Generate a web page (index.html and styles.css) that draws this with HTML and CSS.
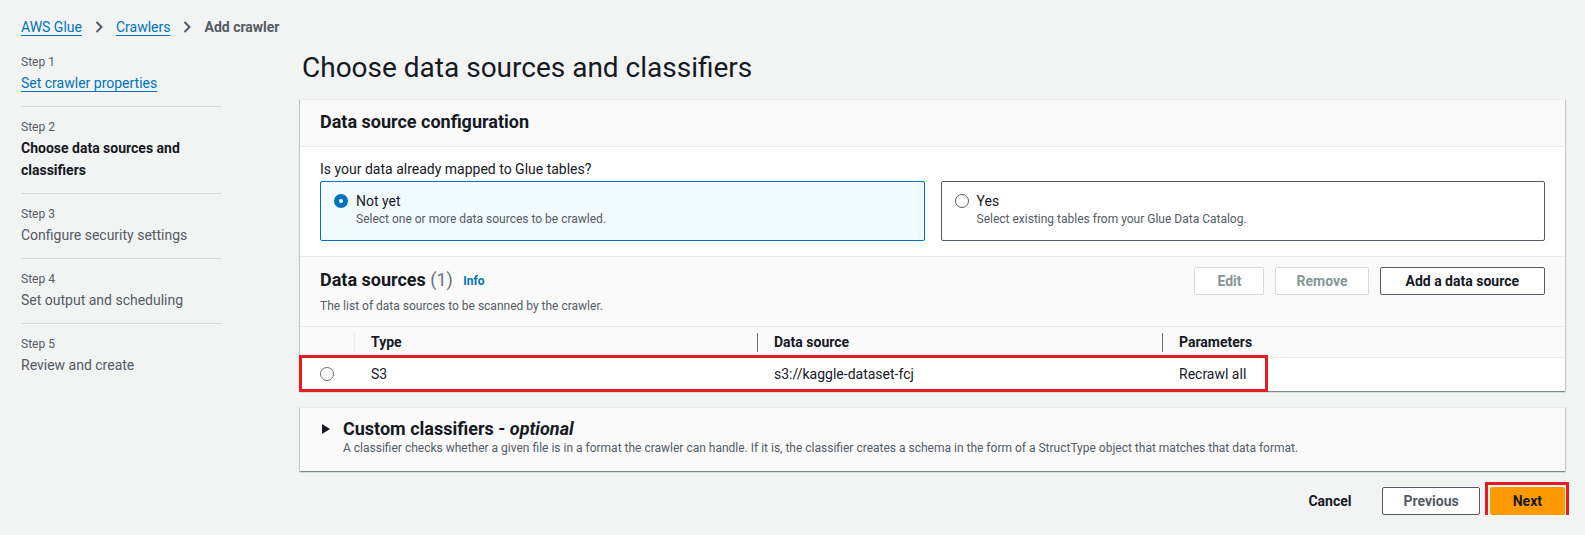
FILE: index.html
```html
<!DOCTYPE html>
<html lang="en">
<head>
<meta charset="utf-8">
<title>Add crawler - AWS Glue</title>
<link rel="stylesheet" href="styles.css">
</head>
<body>
<div class="page">
  <nav class="breadcrumb">
    <a class="crumb-link" href="#">AWS Glue</a>
    <svg class="chev" width="8" height="12" viewBox="0 0 8 12"><polyline points="1.5,1 6.5,6 1.5,11" fill="none" stroke="#545b64" stroke-width="2"/></svg>
    <a class="crumb-link" href="#">Crawlers</a>
    <svg class="chev" width="8" height="12" viewBox="0 0 8 12"><polyline points="1.5,1 6.5,6 1.5,11" fill="none" stroke="#545b64" stroke-width="2"/></svg>
    <span class="crumb-current">Add crawler</span>
  </nav>

  <div class="layout">
    <ul class="steps">
      <li class="step">
        <div class="step-num">Step 1</div>
        <a class="step-title link" href="#">Set crawler properties</a>
      </li>
      <li class="step">
        <div class="step-num">Step 2</div>
        <div class="step-title active">Choose data sources and<br>classifiers</div>
      </li>
      <li class="step">
        <div class="step-num">Step 3</div>
        <div class="step-title">Configure security settings</div>
      </li>
      <li class="step">
        <div class="step-num">Step 4</div>
        <div class="step-title">Set output and scheduling</div>
      </li>
      <li class="step">
        <div class="step-num">Step 5</div>
        <div class="step-title">Review and create</div>
      </li>
    </ul>

    <main class="main">
      <h1 class="page-title">Choose data sources and classifiers</h1>

      <section class="card">
        <header class="card-header">
          <h2 class="card-title">Data source configuration</h2>
        </header>
        <div class="card-body">
          <div class="question">Is your data already mapped to Glue tables?</div>
          <div class="tiles">
            <div class="tile selected">
              <div class="tile-row">
                <span class="radio-on"></span>
                <span class="tile-label">Not yet</span>
              </div>
              <div class="tile-desc">Select one or more data sources to be crawled.</div>
            </div>
            <div class="tile">
              <div class="tile-row">
                <span class="radio-off"></span>
                <span class="tile-label">Yes</span>
              </div>
              <div class="tile-desc">Select existing tables from your Glue Data Catalog.</div>
            </div>
          </div>
        </div>

        <div class="sources">
          <div class="sources-head">
            <div class="sources-text">
              <h2 class="sources-title">Data sources <span class="count">(1)</span> <a class="info" href="#">Info</a></h2>
              <div class="sources-desc">The list of data sources to be scanned by the crawler.</div>
            </div>
            <div class="actions">
              <button class="btn disabled btn-edit">Edit</button>
              <button class="btn disabled">Remove</button>
              <button class="btn btn-add">Add a data source</button>
            </div>
          </div>
          <div class="table-wrap">
            <table class="table">
              <colgroup>
                <col class="c1"><col class="c2"><col class="c3"><col>
              </colgroup>
              <thead>
                <tr>
                  <th></th>
                  <th class="light-sep">Type</th>
                  <th class="sep">Data source</th>
                  <th class="sep">Parameters</th>
                </tr>
              </thead>
              <tbody>
                <tr>
                  <td class="radio-cell"><span class="radio-off small"></span></td>
                  <td>S3</td>
                  <td>s3://kaggle-dataset-fcj</td>
                  <td>Recrawl all</td>
                </tr>
              </tbody>
            </table>
            <div class="highlight row-highlight"></div>
          </div>
        </div>
      </section>

      <section class="card expand">
        <div class="expand-head">
          <svg class="caret" width="8" height="10" viewBox="0 0 8 10"><polygon points="0,0 8,5 0,10" fill="#16191f"/></svg>
          <h2 class="expand-title">Custom classifiers - <em>optional</em></h2>
        </div>
        <div class="expand-desc">A classifier checks whether a given file is in a format the crawler can handle. If it is, the classifier creates a schema in the form of a StructType object that matches that data format.</div>
      </section>

      <div class="footer">
        <button class="btn link-btn">Cancel</button>
        <button class="btn">Previous</button>
        <div class="next-wrap">
          <button class="btn primary">Next</button>
          <div class="highlight next-highlight"></div>
        </div>
      </div>
    </main>
  </div>
</div>
</body>
</html>
```

FILE: styles.css
```css
* { box-sizing: border-box; }

body {
  margin: 0;
  background: #f2f3f3;
  color: #16191f;
  font-family: Roboto, "Liberation Sans", sans-serif;
  font-size: 14px;
  line-height: 20px;
}

.page {
  padding: 17px 20px 0 21px;
}

.breadcrumb {
  display: flex;
  align-items: center;
  height: 20px;
}

.crumb-link {
  color: #0073bb;
  text-decoration: underline;
  text-underline-offset: 3px;
}

.chev {
  margin: 0 13px;
}

.crumb-current {
  color: #545b64;
  font-weight: 700;
}

.layout {
  display: grid;
  grid-template-columns: 200px 1fr;
  column-gap: 79px;
  margin-top: 6px;
}

.steps {
  list-style: none;
  margin: 0;
  padding: 0;
}

.step {
  padding: 12px 0;
  border-top: 1px solid #d5dbdb;
}

.step:first-child {
  border-top: 0;
  padding-top: 11px;
}

.step-num {
  font-size: 12px;
  line-height: 16px;
  color: #545b64;
  margin-bottom: 2px;
}

.step-title {
  display: block;
  line-height: 22px;
  color: #545b64;
}

.step-title.link {
  display: inline-block;
  color: #0073bb;
  text-decoration: underline;
  text-underline-offset: 3px;
}

.step-title.active {
  color: #16191f;
  font-weight: 700;
}

.page-title {
  margin: 0 0 13px 2px;
  padding-top: 7px;
  font-size: 28px;
  line-height: 36px;
  font-weight: 400;
}

.card {
  background: #fff;
  border-top: 1px solid #eaeded;
  box-shadow: 0 1px 1px 0 rgba(0, 28, 36, 0.3), 1px 1px 1px 0 rgba(0, 28, 36, 0.15), -1px 1px 1px 0 rgba(0, 28, 36, 0.15);
}

.card-header {
  background: #fafafa;
  border-bottom: 1px solid #eaeded;
  padding: 11px 20px 13px;
}

.card-title {
  margin: 0;
  font-size: 18px;
  line-height: 22px;
  font-weight: 700;
}

.card-body {
  padding: 12px 20px 15px;
}

.question {
  line-height: 20px;
  margin-bottom: 2px;
}

.tiles {
  display: grid;
  grid-template-columns: 1fr 1fr;
  column-gap: 16px;
}

.tile {
  border: 1px solid #545b64;
  border-radius: 2px;
  padding: 9px 20px 13px 13px;
}

.tile.selected {
  background: #f1faff;
  border-color: #0073bb;
}

.tile-row {
  display: flex;
  align-items: center;
  gap: 8px;
}

.radio-on,
.radio-off {
  display: inline-block;
  width: 14px;
  height: 14px;
  border-radius: 50%;
  flex: none;
}

.radio-on {
  border: 5px solid #0073bb;
  background: #fff;
}

.radio-off {
  border: 1.5px solid #545b64;
  background: #fff;
}

.radio-off.small {
  display: block;
  margin: 0 auto;
  border-color: #687078;
}

.tile-label {
  line-height: 20px;
}

.tile-desc {
  font-size: 12px;
  line-height: 16px;
  color: #545b64;
  padding-left: 22px;
}

.sources {
  background: #fafafa;
  border-top: 1px solid #eaeded;
}

.sources-head {
  display: flex;
  justify-content: space-between;
  align-items: flex-start;
  padding: 10px 20px 12px;
}

.sources-title {
  margin: 2px 0 0;
  font-size: 18px;
  line-height: 22px;
  font-weight: 700;
}

.count {
  font-weight: 400;
  color: #687078;
}

.info {
  font-size: 12px;
  font-weight: 700;
  color: #0073bb;
  text-decoration: none;
  margin-left: 6px;
  vertical-align: 1px;
}

.sources-desc {
  margin-top: 6px;
  font-size: 12px;
  line-height: 16px;
  color: #545b64;
}

.actions {
  display: flex;
  gap: 11px;
}

.btn {
  font-family: inherit;
  font-size: 14px;
  line-height: 20px;
  font-weight: 700;
  color: #545b64;
  background: #fff;
  border: 1px solid #545b64;
  border-radius: 2px;
  padding: 3px 20px;
  cursor: pointer;
}

.actions .btn {
  color: #16191f;
}

.actions .btn.disabled {
  color: #879596;
  border-color: #d5dbdb;
}

.actions .btn-edit {
  padding: 3px 22px;
}

.actions .btn-add {
  padding: 3px 25px;
}

.table-wrap {
  position: relative;
}

.table {
  width: 100%;
  border-collapse: collapse;
  table-layout: fixed;
}

.c1 { width: 54px; }
.c2 { width: 403px; }
.c3 { width: 405px; }

.table th {
  position: relative;
  text-align: left;
  font-weight: 700;
  background: #fafafa;
  border-top: 1px solid #eaeded;
  border-bottom: 1px solid #eaeded;
  padding: 5px 16px 5px 17px;
  line-height: 20px;
  height: 31px;
}

.table th.sep::before,
.table th.light-sep::before {
  content: "";
  position: absolute;
  left: 0;
  top: 6px;
  height: 19px;
  width: 1px;
  background: #687078;
}

.table th.light-sep::before {
  background: #eaeded;
}

.table td {
  background: #fff;
  padding: 6px 16px 6px 17px;
  line-height: 20px;
  height: 33px;
}

.table td.radio-cell {
  padding: 0;
  vertical-align: middle;
}

.highlight {
  position: absolute;
  border: 3px solid #e31b23;
  pointer-events: none;
}

.row-highlight {
  left: -1px;
  top: 29px;
  width: 969px;
  height: 37px;
}

.expand {
  margin-top: 16px;
  background: #fafafa;
  padding: 10px 20px 15px 22px;
}

.expand-head {
  display: flex;
  align-items: center;
  gap: 13px;
}

.caret {
  flex: none;
}

.expand-title {
  margin: 0;
  font-size: 18px;
  line-height: 22px;
  font-weight: 700;
}

.expand-title em {
  font-style: italic;
}

.expand-desc {
  padding-left: 21px;
  font-size: 12px;
  line-height: 16px;
  color: #545b64;
}

.footer {
  display: flex;
  justify-content: flex-end;
  align-items: center;
  gap: 10px;
  margin-top: 16px;
}

.link-btn {
  border-color: transparent;
  background: transparent;
  color: #16191f;
}

.next-wrap {
  position: relative;
}

.primary {
  background: #ff9900;
  border-color: #ff9900;
  color: #16191f;
  padding: 3px 22px;
}

.next-highlight {
  left: -5px;
  top: -5px;
  right: -4px;
  bottom: -7px;
}
```
